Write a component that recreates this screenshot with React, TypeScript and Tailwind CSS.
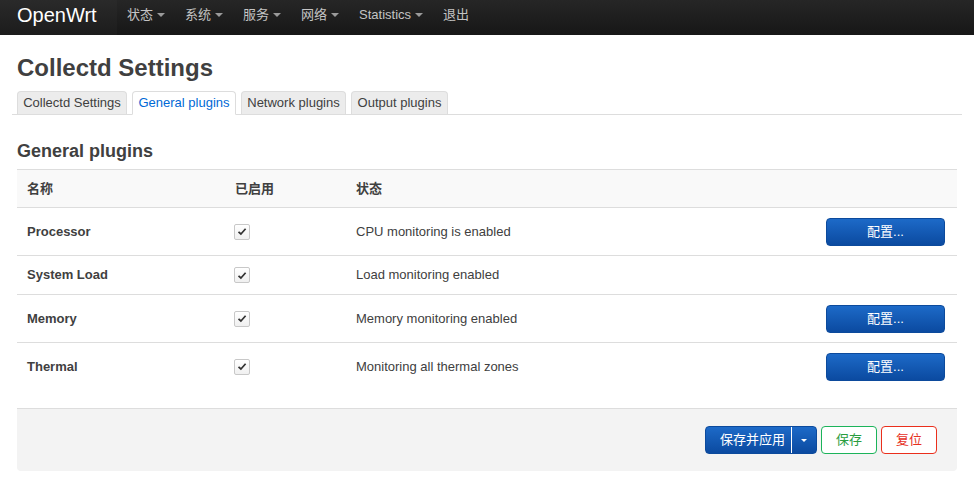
import React from "react";

const font = { fontFamily: '"Liberation Sans", Arial, "Noto Sans CJK SC", sans-serif' };

function Caret() {
  return (
    <span className="ml-[4px] inline-block h-0 w-0 border-x-[4px] border-t-[4px] border-x-transparent border-t-[#9a9a9a] align-middle" />
  );
}

function NavItem({ label, caret = true }: { label: string; caret?: boolean }) {
  return (
    <div className="flex h-full items-center px-[10px] pb-[6px] text-[13px] text-[#c4c4c4]">
      <span>{label}</span>
      {caret && <Caret />}
    </div>
  );
}

function Check() {
  return (
    <div className="flex h-[16px] w-[16px] items-center justify-center rounded-[2px] border border-[#c8c8c8] bg-gradient-to-b from-white to-[#f0f0f0]">
      <svg width="10" height="9" viewBox="0 0 10 9">
        <path d="M1.5 4.8 L3.9 7 L8.6 1.8" fill="none" stroke="#333" strokeWidth="1.7" />
      </svg>
    </div>
  );
}

function BlueBtn() {
  return (
    <div className="flex h-[28px] w-[119px] items-center justify-center rounded-[4px] border border-[#0c4a9c] bg-gradient-to-b from-[#1d6ac8] to-[#0b4aa0] text-[13px] text-white">
      配置...
    </div>
  );
}

type Row = { name: string; status: string; btn: boolean; h: string };
const rows: Row[] = [
  { name: "Processor", status: "CPU monitoring is enabled", btn: true, h: "h-[47px]" },
  { name: "System Load", status: "Load monitoring enabled", btn: false, h: "h-[39px]" },
  { name: "Memory", status: "Memory monitoring enabled", btn: true, h: "h-[48px]" },
  { name: "Thermal", status: "Monitoring all thermal zones", btn: true, h: "h-[48px]" },
];

const tabs = [
  { t: "Collectd Settings", w: "w-[110px]" },
  { t: "General plugins", w: "w-[104px]" },
  { t: "Network plugins", w: "w-[105px]" },
  { t: "Output plugins", w: "w-[97px]" },
];

export default function App() {
  return (
    <div className="min-h-[498px] w-[974px] bg-white text-[#404040]" style={font}>
      {/* navbar */}
      <div className="flex h-[35px] bg-gradient-to-b from-[#262626] to-[#171717]">
        <div className="flex h-full w-[117px] items-center bg-gradient-to-b from-[#2a2a2a] to-[#1c1c1c] pb-[6px] pl-[17px] text-[20px] text-white">
          OpenWrt
        </div>
        <NavItem label="状态" />
        <NavItem label="系统" />
        <NavItem label="服务" />
        <NavItem label="网络" />
        <NavItem label="Statistics" />
        <NavItem label="退出" caret={false} />
      </div>

      <div className="px-[17px]">
        <h1 className="mt-[15px] h-[36px] text-[24px] font-bold leading-[36px] text-[#404040]">Collectd Settings</h1>

        {/* tabs */}
        <div className="-mx-[5px] mt-[5px] flex gap-[5px] border-b border-[#dddddd] px-[5px] text-[13px]">
          {tabs.map((tb, i) => (
            <div
              key={tb.t}
              className={
                tb.w +
                (i === 1
                  ? " -mb-px flex h-[24px] items-center justify-center rounded-t-[4px] border border-b-white border-[#dddddd] bg-white text-[#0069d6]"
                  : " flex h-[23px] items-center justify-center rounded-t-[4px] border border-b-0 border-[#dddddd] bg-[#ececec] text-[#404040]")
              }
            >
              {tb.t}
            </div>
          ))}
        </div>

        <h2 className="mt-[21px] h-[30px] text-[18px] font-bold leading-[30px] text-[#404040]">General plugins</h2>

        {/* table */}
        <div className="mt-[3px] text-[13px]">
          <div className="grid h-[39px] grid-cols-[208px_121px_1fr] items-center border-y border-[#dddddd] bg-[#f9f9f9] font-bold">
            <div className="pl-[10px]">名称</div>
            <div className="pl-[10px]">已启用</div>
            <div className="pl-[10px]">状态</div>
          </div>
          {rows.map((r, i) => (
            <div
              key={r.name}
              className={
                "grid grid-cols-[208px_121px_1fr_auto] items-center " +
                (i > 0 ? "border-t border-[#dddddd] " : "") +
                r.h
              }
            >
              <div className="pl-[10px] font-bold">{r.name}</div>
              <div className="pl-[9px]">
                <Check />
              </div>
              <div className="pl-[10px]">{r.status}</div>
              <div className="pr-[12px]">{r.btn ? <BlueBtn /> : null}</div>
            </div>
          ))}
        </div>

        {/* footer */}
        <div className="mt-[18px] flex h-[63px] items-center justify-end gap-[4px] rounded-b-[4px] border-t border-[#dddddd] bg-[#f3f3f3] pr-[20px] text-[13px]">
          <div className="flex h-[28px] items-stretch overflow-hidden rounded-[4px] border border-[#0c4a9c] bg-gradient-to-b from-[#1d6ac8] to-[#0b4aa0] text-white">
            <div className="flex items-center pl-[14px] pr-[6px]">保存并应用</div>
            <div className="w-px bg-white" />
            <div className="flex w-[24px] items-center justify-center">
              <span className="inline-block h-0 w-0 border-x-[3px] border-t-[3px] border-x-transparent border-t-white" />
            </div>
          </div>
          <div className="flex h-[28px] w-[56px] items-center justify-center rounded-[4px] border border-[#1bb35a] bg-white text-[#2a9d3f]">
            保存
          </div>
          <div className="flex h-[28px] w-[56px] items-center justify-center rounded-[4px] border border-[#ea2f1c] bg-white text-[#e6301d]">
            复位
          </div>
        </div>
      </div>
    </div>
  );
}
